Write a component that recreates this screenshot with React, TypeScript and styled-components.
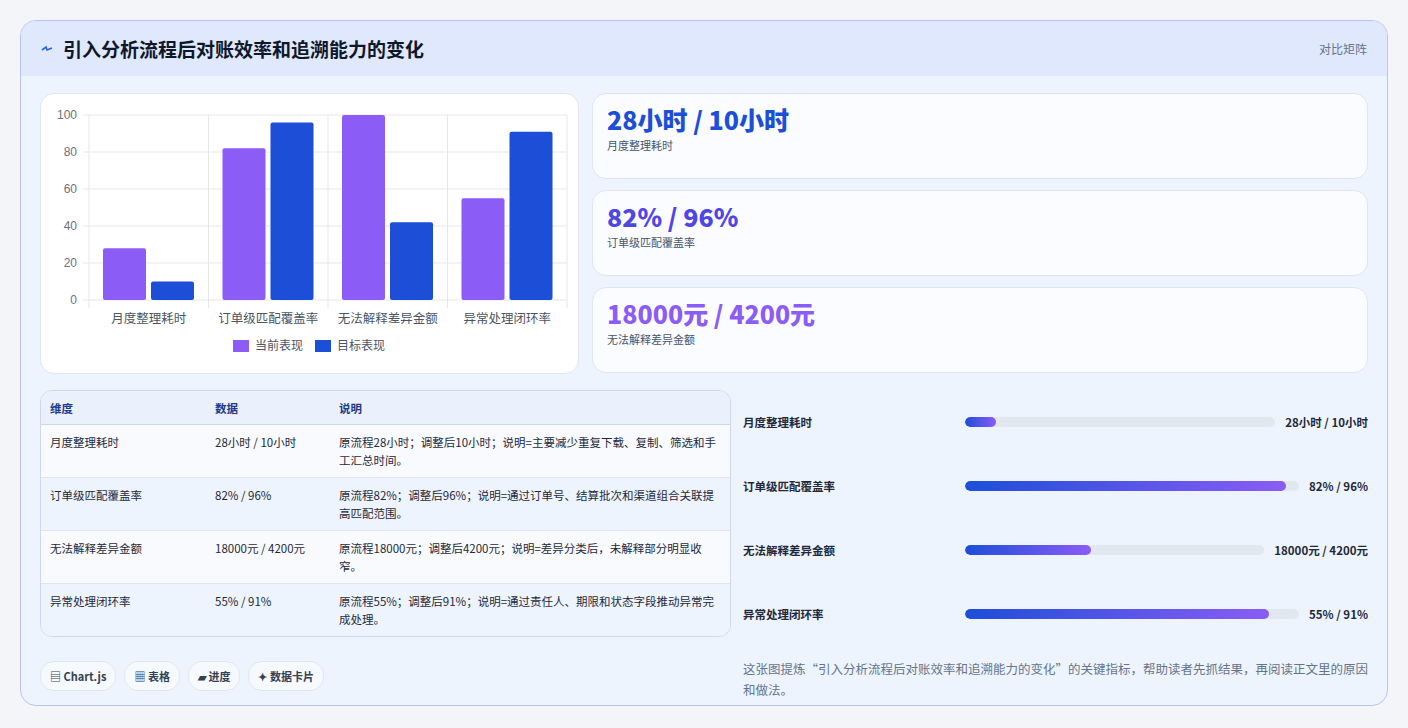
import React from 'react';
import styled, { createGlobalStyle } from 'styled-components';

const Global = createGlobalStyle`
  body { margin: 0; background: #f4f5f8; font-family: "Noto Sans CJK SC", "Noto Sans", sans-serif; color: #1e293b; }
`;

const Page = styled.div`
  padding: 20px 20px 22px 20px;
`;

const Card = styled.div`
  background: #eef4fe;
  border: 1px solid #b9c3ee;
  border-radius: 16px;
  overflow: hidden;
  height: 686px;
  box-sizing: border-box;
`;

const Header = styled.div`
  height: 55px;
  background: #dfe8fd;
  display: flex;
  align-items: center;
  justify-content: space-between;
  padding: 0 20px;
`;

const Title = styled.h1`
  margin: 0;
  font-size: 19px;
  font-weight: 700;
  color: #0f172a;
  display: flex;
  align-items: center;
  gap: 10px;
`;

const Tag = styled.span`
  font-size: 12px;
  color: #64748b;
`;

const Top = styled.div`
  padding: 17px 19px 0 19px;
  display: grid;
  grid-template-columns: 539px 1fr;
  column-gap: 13px;
`;

const Bottom = styled.div`
  padding: 16px 19px 0 19px;
  display: grid;
  grid-template-columns: 691px 1fr;
  column-gap: 12px;
`;

const Panel = styled.div`
  background: #fff;
  border: 1px solid #dfe5f2;
  border-radius: 14px;
`;

const ChartPanel = styled(Panel)`
  height: 281px;
  box-sizing: border-box;
`;

const Stats = styled.div`
  display: flex;
  flex-direction: column;
  gap: 11px;
`;

const StatCard = styled(Panel)`
  height: 86px;
  box-sizing: border-box;
  padding: 9px 14px;
  background: #fbfcff;
`;

const StatValue = styled.div<{ $c: string }>`
  font-size: 25px;
  font-weight: 800;
  color: ${p => p.$c};
  line-height: 32px;
`;

const StatLabel = styled.div`
  font-size: 11px;
  color: #475569;
  margin-top: 2px;
`;

const Table = styled.table`
  width: 100%;
  border-collapse: separate;
  border-spacing: 0;
  border: 1px solid #cfd8e8;
  border-radius: 12px;
  overflow: hidden;
  font-size: 11.5px;
  background: #f8fafd;
`;

const Th = styled.th`
  text-align: left;
  font-weight: 700;
  color: #1e3a8a;
  background: #eaf1fd;
  padding: 8px 9px;
  height: 17px;
  border-bottom: 1px solid #cfd8e8;
`;

const Tr = styled.tr<{ $alt: boolean }>`
  background: ${p => (p.$alt ? '#eef4fd' : '#f8fafd')};
  td { border-bottom: 1px solid #dde4ef; }
  &:last-child td { border-bottom: none; }
`;

const Td = styled.td`
  vertical-align: top;
  padding: 8px 9px 8px 9px;
  line-height: 18px;
  color: #1e293b;
  height: 36px;
`;

const Chips = styled.div`
  display: flex;
  gap: 8px;
  margin-top: 24px;
`;

const Chip = styled.span`
  font-size: 11px;
  font-weight: 600;
  color: #334155;
  background: #f6f9fe;
  border: 1px solid #e0e6f0;
  border-radius: 14px;
  padding: 6px 9px;
`;

const Bars = styled.div`
  display: flex;
  flex-direction: column;
  padding: 0;
`;

const BarRow = styled.div`
  display: flex;
  align-items: center;
  height: 64px;
  gap: 10px;
  font-size: 11.5px;
`;

const BarLabel = styled.div`
  width: 212px;
  font-weight: 600;
  color: #1e293b;
`;

const Track = styled.div`
  flex: 1;
  height: 10px;
  background: #e2e8f0;
  border-radius: 5px;
  overflow: hidden;
`;

const Fill = styled.div`
  height: 100%;
  border-radius: 5px;
  background: linear-gradient(90deg, #1d4ed8, #8b5cf6);
`;

const BarValue = styled.div`
  font-weight: 700;
  color: #1e293b;
`;

const Note = styled.p`
  margin: 12px 0 0 0;
  font-size: 12.5px;
  line-height: 21px;
  color: #64748b;
`;

const cats = ['月度整理耗时', '订单级匹配覆盖率', '无法解释差异金额', '异常处理闭环率'];
const cur = [28, 82, 100, 55];
const tgt = [10, 96, 42, 91];

const Chart = () => {
  const x0 = 48, x1 = 526, y0 = 21, y1 = 206;
  const h = (v: number) => ((y1 - y0) * v) / 100;
  const cw = (x1 - x0) / 4;
  return (
    <svg width="537" height="278" style={{ display: 'block' }} fontFamily='"Liberation Sans", "Noto Sans CJK SC", sans-serif'>
      {[0, 20, 40, 60, 80, 100].map(v => {
        const y = y1 - h(v);
        return (
          <g key={v}>
            <line x1={x0 - 6} x2={x1} y1={y} y2={y} stroke="#e5e7eb" />
            <text x={x0 - 12} y={y + 4} fontSize="12" fill="#6b7280" textAnchor="end">{v}</text>
          </g>
        );
      })}
      {[0, 1, 2, 3, 4].map(i => (
        <line key={i} x1={x0 + cw * i} x2={x0 + cw * i} y1={y0} y2={y1 + 8} stroke="#e5e7eb" />
      ))}
      {cats.map((c, i) => {
        const bx = x0 + cw * i + 14;
        return (
          <g key={c}>
            <rect x={bx} y={y1 - h(cur[i])} width={43} height={h(cur[i])} rx="2" fill="#8b5cf6" />
            <rect x={bx + 48} y={y1 - h(tgt[i])} width={43} height={h(tgt[i])} rx="2" fill="#1d4ed8" />
            <text x={x0 + cw * i + cw / 2} y={229} fontSize="12.5" fill="#4b5563" textAnchor="middle">{c}</text>
          </g>
        );
      })}
      <rect x={192} y={246} width={16} height={12} fill="#8b5cf6" />
      <text x={214} y={256} fontSize="12" fill="#4b5563">当前表现</text>
      <rect x={274} y={246} width={16} height={12} fill="#1d4ed8" />
      <text x={296} y={256} fontSize="12" fill="#4b5563">目标表现</text>
    </svg>
  );
};

const rows = [
  ['月度整理耗时', '28小时 / 10小时', '原流程28小时；调整后10小时；说明=主要减少重复下载、复制、筛选和手工汇总时间。', 10],
  ['订单级匹配覆盖率', '82% / 96%', '原流程82%；调整后96%；说明=通过订单号、结算批次和渠道组合关联提高匹配范围。', 96],
  ['无法解释差异金额', '18000元 / 4200元', '原流程18000元；调整后4200元；说明=差异分类后，未解释部分明显收窄。', 42],
  ['异常处理闭环率', '55% / 91%', '原流程55%；调整后91%；说明=通过责任人、期限和状态字段推动异常完成处理。', 91],
] as const;

export default function App() {
  return (
    <Page>
      <Global />
      <Card>
        <Header>
          <Title>
            <svg width="12" height="10" viewBox="0 0 12 10"><path d="M1 6 L5 3 L6 6 L11 4" stroke="#2563eb" strokeWidth="1.6" fill="none" /></svg>
            引入分析流程后对账效率和追溯能力的变化
          </Title>
          <Tag>对比矩阵</Tag>
        </Header>
        <Top>
          <ChartPanel><Chart /></ChartPanel>
          <Stats>
            <StatCard><StatValue $c="#1d4ed8">28小时 / 10小时</StatValue><StatLabel>月度整理耗时</StatLabel></StatCard>
            <StatCard><StatValue $c="#4f46e5">82% / 96%</StatValue><StatLabel>订单级匹配覆盖率</StatLabel></StatCard>
            <StatCard><StatValue $c="#8b5cf6">18000元 / 4200元</StatValue><StatLabel>无法解释差异金额</StatLabel></StatCard>
          </Stats>
        </Top>
        <Bottom>
          <div>
            <Table>
              <colgroup><col style={{ width: 165 }} /><col style={{ width: 124 }} /><col /></colgroup>
              <thead><tr><Th>维度</Th><Th>数据</Th><Th>说明</Th></tr></thead>
              <tbody>
                {rows.map((r, i) => (
                  <Tr key={r[0]} $alt={i % 2 === 1}><Td>{r[0]}</Td><Td>{r[1]}</Td><Td>{r[2]}</Td></Tr>
                ))}
              </tbody>
            </Table>
            <Chips>
              <Chip>▤ Chart.js</Chip>
              <Chip>▦ 表格</Chip>
              <Chip>▰ 进度</Chip>
              <Chip>✦ 数据卡片</Chip>
            </Chips>
          </div>
          <div>
            <Bars>
              {rows.map(r => (
                <BarRow key={r[0]}>
                  <BarLabel>{r[0]}</BarLabel>
                  <Track><Fill style={{ width: `${r[3]}%` }} /></Track>
                  <BarValue>{r[1]}</BarValue>
                </BarRow>
              ))}
            </Bars>
            <Note>这张图提炼“引入分析流程后对账效率和追溯能力的变化”的关键指标，帮助读者先抓结果，再阅读正文里的原因和做法。</Note>
          </div>
        </Bottom>
      </Card>
    </Page>
  );
}
